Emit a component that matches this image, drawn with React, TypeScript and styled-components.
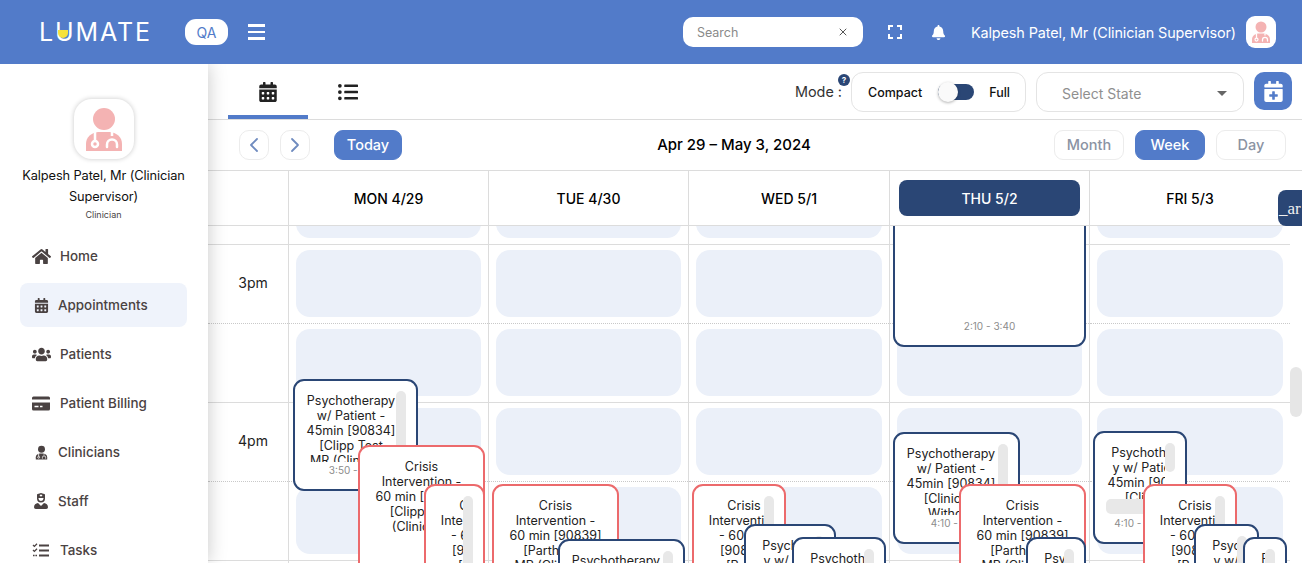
import styled, { createGlobalStyle } from 'styled-components';
import { ChevronLeft, ChevronRight, X } from 'lucide-react';
import { FaBell, FaCalendarAlt, FaCalendarPlus, FaHome, FaListUl, FaUserNurse, FaUsers } from 'react-icons/fa';

const BLUE = '#527bc9';
const NAVY = '#2a4675';
const RED = '#ec6a6c';
const LINE = '#dcdcdc';
const COLUMNS = '80px 200px 200px 201px 200px 201px';

const GlobalStyle = createGlobalStyle`
  html, body { margin: 0; padding: 0; background: #fff; overflow: hidden; }
  * { box-sizing: border-box; }
  body { font-family: Inter, "Noto Sans", sans-serif; color: #111; }
`;

const Page = styled.div`
  width: 1302px;
  height: 563px;
  display: flex;
  flex-direction: column;
  overflow: hidden;
  position: relative;
`;

const TopBar = styled.header`
  height: 64px;
  flex: none;
  background: ${BLUE};
  display: flex;
  align-items: center;
  padding: 0 26px 0 39px;
  color: #fff;
  position: relative;
  z-index: 3;
`;

const Logo = styled.div`
  position: relative;
  width: 111px;
  font-size: 25px;
  font-weight: 400;
  letter-spacing: 1.9px;
  line-height: 1;
  white-space: nowrap;
`;

const LogoDot = styled.span`
  position: absolute;
  left: 19px;
  top: 10px;
  width: 10px;
  height: 8px;
  border-radius: 0 0 6px 6px;
  background: #f5e23c;
`;

const EnvPill = styled.div`
  margin-left: 35px;
  width: 43px;
  height: 26px;
  background: #fff;
  color: ${BLUE};
  border-radius: 11px;
  font-size: 14px;
  display: flex;
  align-items: center;
  justify-content: center;
`;

const Burger = styled.div`
  margin-left: 20px;
  width: 17px;
  display: flex;
  flex-direction: column;
  gap: 4px;
  span { height: 2.5px; background: #fff; display: block; }
`;

const SearchBox = styled.div`
  margin-left: auto;
  width: 180px;
  height: 30px;
  border-radius: 10px;
  background: #fff;
  color: #8a8a8a;
  font-size: 12.5px;
  display: flex;
  align-items: center;
  justify-content: space-between;
  padding: 0 14px;
`;

const TopIcon = styled.div<{ $gap: number }>`
  margin-left: ${(p) => p.$gap}px;
  width: 16px;
  height: 16px;
  display: flex;
  align-items: center;
  justify-content: center;
`;

const TopName = styled.div`
  margin-left: 24px;
  font-size: 14.4px;
  font-weight: 400;
  letter-spacing: -0.1px;
  white-space: nowrap;
`;

const TopAvatar = styled.div`
  margin-left: 10px;
  width: 30px;
  height: 32px;
  border-radius: 9px;
  background: #fff;
  display: flex;
  align-items: center;
  justify-content: center;
`;

const Shell = styled.div`
  flex: 1;
  display: flex;
  min-height: 0;
`;

const Sidebar = styled.aside`
  width: 208px;
  flex: none;
  background: #fff;
  box-shadow: 0 0 18px rgba(0, 0, 0, 0.22);
  position: relative;
  z-index: 2;
  display: flex;
  flex-direction: column;
  align-items: center;
  padding: 35px 21px 0 20px;
  overflow: hidden;
`;

const ProfileCard = styled.div`
  width: 60px;
  height: 60px;
  border-radius: 18px;
  background: #fff;
  box-shadow: 0 0 5px rgba(0, 0, 0, 0.22);
  flex: none;
`;

const ProfileName = styled.div`
  margin-top: 6px;
  width: 176px;
  font-size: 12.8px;
  line-height: 21px;
  text-align: center;
  letter-spacing: -0.1px;
  color: #111;
`;

const ProfileRole = styled.div`
  font-size: 9px;
  line-height: 15px;
  color: #4a4545;
`;

const Nav = styled.nav`
  align-self: stretch;
  margin-top: 12px;
  display: flex;
  flex-direction: column;
  gap: 5px;
`;

const NavItem = styled.div<{ $active?: boolean; $gap: number }>`
  height: 44px;
  flex: none;
  border-radius: 8px;
  display: flex;
  align-items: center;
  gap: ${(p) => p.$gap}px;
  padding-left: 12px;
  font-size: 13.4px;
  font-weight: 500;
  color: #4a4242;
  background: ${(p) => (p.$active ? '#eff3fb' : 'transparent')};
  svg { flex: none; }
`;

const Main = styled.main`
  flex: 1;
  min-width: 0;
  display: flex;
  flex-direction: column;
  position: relative;
`;

const TabRow = styled.div`
  height: 56px;
  flex: none;
  display: flex;
  align-items: flex-start;
  padding: 8px 10px 0 20px;
  border-bottom: 1px solid ${LINE};
`;

const Tab = styled.div<{ $active?: boolean }>`
  width: 80px;
  height: 47px;
  display: flex;
  justify-content: center;
  padding-top: 10px;
  color: #222;
  border-bottom: 4px solid ${(p) => (p.$active ? BLUE : 'transparent')};
`;

const ModeLabel = styled.div`
  margin-left: auto;
  position: relative;
  margin-top: 11px;
  font-size: 14.4px;
  color: #333;
  padding-right: 9px;
  white-space: nowrap;
`;

const HelpBadge = styled.span`
  position: absolute;
  right: 1px;
  top: -9px;
  width: 12px;
  height: 12px;
  border-radius: 50%;
  background: ${NAVY};
  color: #fff;
  font-size: 8px;
  font-weight: 700;
  display: flex;
  align-items: center;
  justify-content: center;
`;

const ModeBox = styled.div`
  width: 175px;
  height: 40px;
  border: 1px solid #e4e4e4;
  border-radius: 12px;
  display: flex;
  align-items: center;
  padding: 0 15px 0 16px;
  font-size: 12.5px;
  font-weight: 500;
  color: #111;
`;

const Track = styled.div`
  width: 36px;
  height: 16px;
  border-radius: 8px;
  background: ${NAVY};
  margin: 0 15px 0 16px;
  position: relative;
  flex: none;
`;

const Thumb = styled.span`
  position: absolute;
  left: 0;
  top: -2px;
  width: 20px;
  height: 20px;
  border-radius: 50%;
  background: #fafafa;
  box-shadow: 0 1px 3px rgba(0, 0, 0, 0.3);
`;

const StateSelect = styled.div`
  width: 208px;
  height: 40px;
  margin-left: 10px;
  border: 1px solid #e4e4e4;
  border-radius: 12px;
  display: flex;
  align-items: center;
  justify-content: space-between;
  padding: 2px 16px 0 25px;
  font-size: 14px;
  color: #8f8f8f;
`;

const Caret = styled.span`
  width: 0;
  height: 0;
  border-left: 5px solid transparent;
  border-right: 5px solid transparent;
  border-top: 5px solid #666;
`;

const AddButton = styled.div`
  width: 38px;
  height: 38px;
  margin-left: 10px;
  border-radius: 10px;
  background: ${BLUE};
  color: #fff;
  display: flex;
  align-items: center;
  justify-content: center;
  flex: none;
`;

const ToolRow = styled.div`
  height: 51px;
  flex: none;
  display: flex;
  align-items: center;
  justify-content: space-between;
  padding: 0 16px 1px 31px;
  border-bottom: 1px solid ${LINE};
`;

const ToolGroup = styled.div`
  display: flex;
  align-items: center;
`;

const RoundButton = styled.div`
  width: 30px;
  height: 30px;
  border-radius: 10px;
  border: 1px solid #ececec;
  color: #6f8bbf;
  display: flex;
  align-items: center;
  justify-content: center;
  margin-right: 11px;
`;

const PillButton = styled.div<{ $active?: boolean; $w: number }>`
  width: ${(p) => p.$w}px;
  height: 30px;
  border-radius: 9px;
  font-size: 14.5px;
  font-weight: 500;
  display: flex;
  align-items: center;
  justify-content: center;
  background: ${(p) => (p.$active ? BLUE : '#fff')};
  color: ${(p) => (p.$active ? '#fff' : '#8b93a3')};
  border: 1px solid ${(p) => (p.$active ? BLUE : '#ececec')};
  & + & { margin-left: 11px; }
`;

const TodayWrap = styled.div`
  margin-left: 13px;
`;

const RangeTitle = styled.div`
  font-size: 15px;
  font-weight: 500;
  color: #000;
  margin-left: 12px;
  white-space: nowrap;
`;

const CalendarGrid = styled.div`
  flex: 1;
  min-height: 0;
  display: flex;
  flex-direction: column;
  padding-right: 12px;
  overflow: hidden;
`;

const HeadRow = styled.div`
  height: 55px;
  flex: none;
  display: grid;
  grid-template-columns: ${COLUMNS};
  border-bottom: 1px solid ${LINE};
`;

const HeadCell = styled.div<{ $today?: boolean }>`
  border-left: 1px solid ${LINE};
  display: flex;
  align-items: center;
  justify-content: center;
  padding: 0 9px;
  font-size: 14px;
  font-weight: 500;
  color: #000;
  &:first-child { border-left: none; }
  span {
    width: 100%;
    height: 36px;
    display: flex;
    align-items: center;
    justify-content: center;
    border-radius: 8px;
    background: ${(p) => (p.$today ? NAVY : 'transparent')};
    color: ${(p) => (p.$today ? '#fff' : '#000')};
  }
`;

const BodyGrid = styled.div`
  flex: 1;
  min-height: 0;
  display: grid;
  grid-template-columns: ${COLUMNS};
  overflow: hidden;
`;

const TimeColumn = styled.div`
  display: flex;
  flex-direction: column;
`;

const DayColumn = styled.div`
  display: flex;
  flex-direction: column;
  border-left: 1px solid ${LINE};
  position: relative;
`;

const Slot = styled.div<{ $first?: boolean; $dotted?: boolean }>`
  height: ${(p) => (p.$first ? 19 : 79)}px;
  flex: none;
  overflow: hidden;
  display: flex;
  flex-direction: column;
  justify-content: flex-end;
  padding: 0 7px 6px 7px;
  border-bottom: 1px ${(p) => (p.$dotted ? 'dotted #c9c9c9' : `solid ${LINE}`)};
`;

const SlotFill = styled.div`
  height: 67px;
  flex: none;
  border-radius: 14px;
  background: #ebf0f9;
`;

const TimeSlot = styled.div<{ $first?: boolean; $dotted?: boolean }>`
  height: ${(p) => (p.$first ? 19 : 79)}px;
  flex: none;
  display: flex;
  align-items: center;
  justify-content: center;
  padding: 0 0 3px 10px;
  font-size: 14px;
  color: #222;
  border-bottom: 1px ${(p) => (p.$dotted ? 'dotted #c9c9c9' : `solid ${LINE}`)};
`;

const Event = styled.div<{ $x: number; $y: number; $w: number; $h: number; $tone: string; $z: number }>`
  position: absolute;
  left: ${(p) => p.$x}px;
  top: ${(p) => p.$y}px;
  width: ${(p) => p.$w}px;
  height: ${(p) => p.$h}px;
  z-index: ${(p) => p.$z};
  background: #fff;
  border: 2px solid ${(p) => p.$tone};
  border-radius: 11px;
  overflow: hidden;
  padding: 12px 0 0 11px;
`;

// the clip ends where the fake scrollbar starts, the inner block may be wider than it
const TitleClip = styled.div<{ $w: number; $timed?: boolean }>`
  width: ${(p) => p.$w}px;
  overflow: hidden;
  max-height: ${(p) => (p.$timed ? '69px' : 'none')};
`;

const TitleLines = styled.div<{ $w: number }>`
  width: ${(p) => p.$w}px;
  text-align: center;
  font-size: 12.5px;
  line-height: 15px;
  color: #222;
  white-space: pre;
`;

const EventTime = styled.div`
  position: absolute;
  left: 0;
  right: 0;
  bottom: 13px;
  text-align: center;
  font-size: 10px;
  line-height: 12px;
  color: #8c8c8c;
`;

const ThumbBar = styled.span<{ $h: number }>`
  position: absolute;
  top: 10px;
  right: 10px;
  width: 10px;
  height: ${(p) => p.$h}px;
  border-radius: 5px;
  background: #e8e8e8;
`;

const ThumbBarWide = styled.span`
  position: absolute;
  left: 11px;
  bottom: 28px;
  width: 46px;
  height: 15px;
  border-radius: 5px;
  background: #e8e8e8;
`;

const PageScrollThumb = styled.div`
  position: absolute;
  right: 0;
  top: 303px;
  width: 12px;
  height: 50px;
  border-radius: 6px;
  background: #e6e6e6;
`;

const HoverChip = styled.div`
  position: absolute;
  right: 0;
  top: 126px;
  width: 24px;
  height: 36px;
  border-radius: 8px 0 0 8px;
  background: ${NAVY};
  color: #f0f0f0;
  font-family: "Liberation Serif", serif;
  font-size: 17px;
  line-height: 38px;
  padding-left: 1px;
  overflow: hidden;
  white-space: nowrap;
  z-index: 5;
`;

const Doctor = ({ size, body, cut }: { size: number; body: string; cut: string }) => (
  <svg width={size} height={size} viewBox="0 0 60 60">
    <circle cx="30" cy="20" r="11" fill={body} />
    <path d="M12 52v-7c0-7 5-11 12-12h12c7 1 12 5 12 12v7z" fill={body} />
    <path d="M21 33v9M38 33v4" stroke={cut} strokeWidth="2.5" fill="none" />
    <circle cx="21" cy="45" r="3" fill="none" stroke={cut} strokeWidth="2.5" />
    <path d="M33 48v-2.5a5 5 0 0 1 10 0V48" stroke={cut} strokeWidth="2.5" fill="none" strokeLinecap="round" />
  </svg>
);

const FullscreenIcon = () => (
  <svg width="14" height="14" viewBox="0 0 14 14" fill="none" stroke="#fff" strokeWidth="2">
    <path d="M1 5V1h4M9 1h4v4M13 9v4H9M5 13H1V9" />
  </svg>
);

const BillingIcon = () => (
  <svg width="19" height="15" viewBox="0 0 19 15">
    <rect width="18" height="14" y="0.5" rx="1.5" fill="#4a4242" />
    <rect y="3.5" width="18" height="3" fill="#fff" />
    <path d="M2.5 10.5h4M8 10.5h2.5" stroke="#fff" strokeWidth="1.5" />
  </svg>
);

const TasksIcon = () => (
  <svg width="18" height="15" viewBox="0 0 18 15" fill="none" stroke="#4a4242">
    <path d="M7 2.5h10M7 7.5h10M7 12.5h10" strokeWidth="1.8" />
    <path d="M1 2l1.4 1.4L5 .8M1 7l1.4 1.4L5 5.8" strokeWidth="1.3" />
    <path d="M1 12.5h1.6M3.4 12.5H5" strokeWidth="1.5" />
  </svg>
);

const PSY_HEAD = 'Psychotherapy\nw/ Patient -\n45min [90834]\n';
const PSY_NARROW = 'Psychotherap\ny w/ Patient -\n45min [90834]\n[Clinician';
const CRISIS_HEAD = 'Crisis\nIntervention -\n60 min [90839]\n';
const CRISIS_NARROW = 'Crisis\nIntervention\n- 60 min\n[90839]\n[Parth';

type Appt = {
  x: number;
  y: number;
  w: number;
  h: number;
  red?: boolean;
  title?: string;
  inner?: number;
  time?: string;
  bar?: number;
  wideBar?: boolean;
};

// page coordinates, the column offset is taken off below
const days: { label: string; left: number; today?: boolean; events: Appt[] }[] = [
  {
    label: 'MON 4/29',
    left: 289,
    events: [
      { x: 293, y: 379, w: 125, h: 112, title: PSY_HEAD + '[Clipp Test\nMR (Clinician)', inner: 90, time: '3:50 - 4:35', bar: 64 },
      { x: 358, y: 445, w: 127, h: 160, red: true, title: CRISIS_HEAD + '[Clipp Test\n(Clinician)', inner: 101 },
      { x: 424, y: 484, w: 61, h: 120, red: true, title: CRISIS_NARROW, inner: 78, bar: 90 },
    ],
  },
  {
    label: 'TUE 4/30',
    left: 489,
    events: [
      { x: 492, y: 484, w: 127, h: 120, red: true, title: CRISIS_HEAD + '[Parth Test\nMR (Clinician)', inner: 101 },
      { x: 558, y: 539, w: 127, h: 80, title: PSY_HEAD, inner: 90, bar: 64 },
    ],
  },
  {
    label: 'WED 5/1',
    left: 689,
    events: [
      { x: 692, y: 484, w: 94, h: 120, red: true, title: CRISIS_NARROW, inner: 78, bar: 64 },
      { x: 744, y: 524, w: 92, h: 80, title: PSY_NARROW, inner: 92, bar: 64 },
      { x: 792, y: 537, w: 94, h: 80, title: PSY_NARROW, inner: 92, bar: 64 },
    ],
  },
  {
    label: 'THU 5/2',
    left: 890,
    today: true,
    events: [
      { x: 893, y: 166, w: 193, h: 181, time: '2:10 - 3:40' },
      { x: 893, y: 432, w: 127, h: 112, title: PSY_HEAD + '[Clinician\nWithout', inner: 90, time: '4:10 - 4:55', bar: 64 },
      { x: 959, y: 484, w: 127, h: 120, red: true, title: CRISIS_HEAD + '[Parth Test\nMR (Clinician)', inner: 101 },
      { x: 1026, y: 537, w: 60, h: 80, title: PSY_NARROW, inner: 92, bar: 64 },
    ],
  },
  {
    label: 'FRI 5/3',
    left: 1090,
    events: [
      { x: 1093, y: 431, w: 94, h: 113, title: PSY_NARROW, inner: 92, time: '4:10 - 4:55', bar: 29, wideBar: true },
      { x: 1143, y: 484, w: 94, h: 120, red: true, title: CRISIS_NARROW, inner: 78, bar: 64 },
      { x: 1194, y: 524, w: 65, h: 80, title: PSY_NARROW, inner: 92, bar: 64 },
      { x: 1243, y: 537, w: 44, h: 80, title: PSY_NARROW, inner: 92, bar: 64 },
    ],
  },
];

const BODY_TOP = 226;

export default function App() {
  return (
    <Page>
      <GlobalStyle />
      <TopBar>
        <Logo>
          LUMATE
          <LogoDot />
        </Logo>
        <EnvPill>QA</EnvPill>
        <Burger>
          <span />
          <span />
          <span />
        </Burger>
        <SearchBox>
          Search
          <X size={12} color="#555" />
        </SearchBox>
        <TopIcon $gap={24}>
          <FullscreenIcon />
        </TopIcon>
        <TopIcon $gap={28}>
          <FaBell size={15} />
        </TopIcon>
        <TopName>Kalpesh Patel, Mr (Clinician Supervisor)</TopName>
        <TopAvatar>
          <Doctor size={30} body="#f4b3b3" cut="#fff" />
        </TopAvatar>
      </TopBar>

      <Shell>
        <Sidebar>
          <ProfileCard>
            <Doctor size={60} body="#f4b3b3" cut="#fff" />
          </ProfileCard>
          <ProfileName>Kalpesh Patel, Mr (Clinician Supervisor)</ProfileName>
          <ProfileRole>Clinician</ProfileRole>
          <Nav>
            <NavItem $gap={9}>
              <FaHome size={19} />
              Home
            </NavItem>
            <NavItem $active $gap={9}>
              <FaCalendarAlt size={15} style={{ marginLeft: 2 }} />
              Appointments
            </NavItem>
            <NavItem $gap={9}>
              <FaUsers size={19} />
              Patients
            </NavItem>
            <NavItem $gap={9}>
              <BillingIcon />
              Patient Billing
            </NavItem>
            <NavItem $gap={7}>
              <Doctor size={19} body="#4a4242" cut="#fff" />
              Clinicians
            </NavItem>
            <NavItem $gap={9}>
              <FaUserNurse size={16} style={{ marginLeft: 1 }} />
              Staff
            </NavItem>
            <NavItem $gap={10}>
              <TasksIcon />
              Tasks
            </NavItem>
          </Nav>
        </Sidebar>

        <Main>
          <TabRow>
            <Tab $active>
              <FaCalendarAlt size={20} />
            </Tab>
            <Tab>
              <FaListUl size={20} />
            </Tab>
            <ModeLabel>
              Mode :
              <HelpBadge>?</HelpBadge>
            </ModeLabel>
            <ModeBox>
              Compact
              <Track>
                <Thumb />
              </Track>
              Full
            </ModeBox>
            <StateSelect>
              Select State
              <Caret />
            </StateSelect>
            <AddButton>
              <FaCalendarPlus size={21} />
            </AddButton>
          </TabRow>

          <ToolRow>
            <ToolGroup>
              <RoundButton>
                <ChevronLeft size={24} strokeWidth={1.8} />
              </RoundButton>
              <RoundButton>
                <ChevronRight size={24} strokeWidth={1.8} />
              </RoundButton>
              <TodayWrap>
                <PillButton $active $w={68}>Today</PillButton>
              </TodayWrap>
            </ToolGroup>
            <RangeTitle>Apr 29 – May 3, 2024</RangeTitle>
            <ToolGroup>
              <PillButton $w={70}>Month</PillButton>
              <PillButton $active $w={70}>Week</PillButton>
              <PillButton $w={70}>Day</PillButton>
            </ToolGroup>
          </ToolRow>

          <CalendarGrid>
            <HeadRow>
              <HeadCell />
              {days.map((d) => (
                <HeadCell key={d.label} $today={d.today}>
                  <span>{d.label}</span>
                </HeadCell>
              ))}
            </HeadRow>
            <BodyGrid>
              <TimeColumn>
                {[0, 1, 2, 3, 4, 5].map((i) => (
                  <TimeSlot key={i} $first={i === 0} $dotted={i === 1 || i === 3}>
                    {i === 1 ? '3pm' : i === 3 ? '4pm' : ''}
                  </TimeSlot>
                ))}
              </TimeColumn>
              {days.map((d) => (
                <DayColumn key={d.label}>
                  {[0, 1, 2, 3, 4, 5].map((i) => (
                    <Slot key={i} $first={i === 0} $dotted={i === 1 || i === 3}>
                      <SlotFill />
                    </Slot>
                  ))}
                  {d.events.map((e, i) => (
                    <Event
                      key={i}
                      $x={e.x - d.left}
                      $y={e.y - BODY_TOP}
                      $w={e.w}
                      $h={e.h}
                      $z={i + 1}
                      $tone={e.red ? RED : NAVY}
                    >
                      {e.title && (
                        <TitleClip $w={e.bar ? e.w - 35 : e.w - 26} $timed={!!e.time}>
                          <TitleLines $w={e.inner ?? 90}>{e.title}</TitleLines>
                        </TitleClip>
                      )}
                      {e.bar && <ThumbBar $h={e.bar} />}
                      {e.wideBar && <ThumbBarWide />}
                      {e.time && <EventTime>{e.time}</EventTime>}
                    </Event>
                  ))}
                </DayColumn>
              ))}
            </BodyGrid>
          </CalendarGrid>
          <PageScrollThumb />
          <HoverChip>_ar</HoverChip>
        </Main>
      </Shell>
    </Page>
  );
}
